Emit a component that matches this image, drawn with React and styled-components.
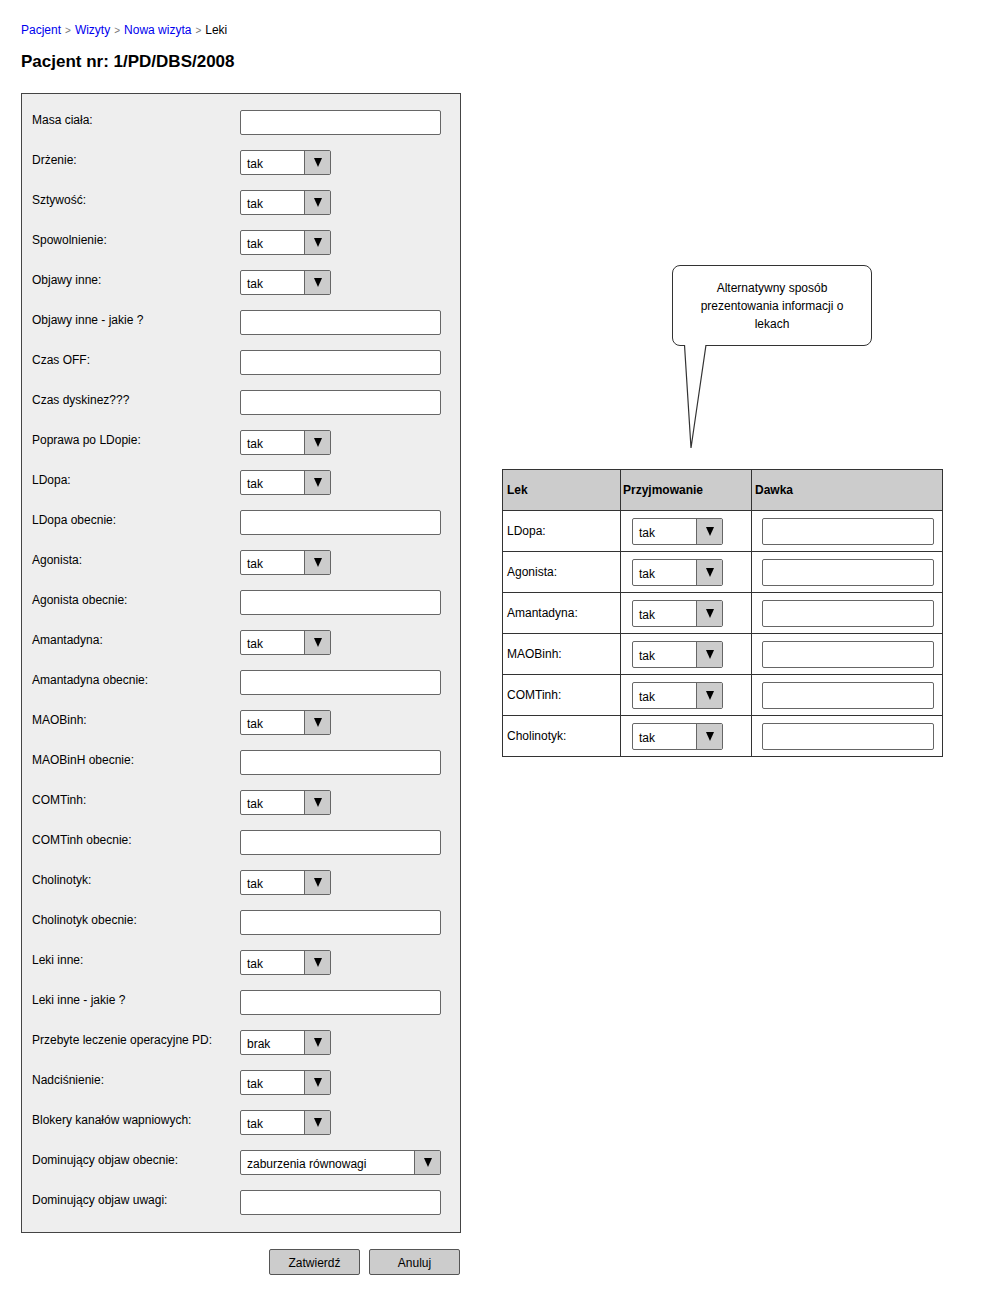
import React from 'react'
import styled, { createGlobalStyle } from 'styled-components'

const GlobalStyle = createGlobalStyle`
  body {
    margin: 0;
    background: #ffffff;
    font-family: 'Liberation Sans', Arial, sans-serif;
    font-size: 12px;
    color: #000;
  }
`

const Page = styled.div`
  display: flex;
  gap: 41px;
  padding: 20px 0 0 21px;
`

const LeftColumn = styled.div`
  width: 440px;
  display: flex;
  flex-direction: column;
`

const Breadcrumb = styled.div`
  line-height: 18px;
  font-size: 12px;
  padding-top: 1px;
  a {
    color: #0000ee;
    text-decoration: none;
  }
  span.sep {
    color: #777;
    font-size: 10px;
    margin: 0 4px;
  }
`

const Title = styled.h1`
  margin: 12px 0 0;
  font-size: 17px;
  line-height: 20px;
  font-weight: bold;
`

const Panel = styled.div`
  margin-top: 21px;
  background: #eeeeee;
  border: 1px solid #444;
  padding: 16px 19px 17px 10px;
  display: grid;
  grid-template-columns: 208px 201px;
  grid-auto-rows: 25px;
  row-gap: 15px;
  align-items: center;
`

const Label = styled.div`
  padding-bottom: 5px;
  white-space: nowrap;
`

const Field = styled.div`
  width: ${p => p.$width}px;
  height: ${p => p.$height || 25}px;
  box-sizing: border-box;
  background: #fff;
  border: 1px solid #666;
  border-radius: 2px;
`

const SelectBox = styled.div`
  width: ${p => p.$width}px;
  height: ${p => p.$height || 25}px;
  box-sizing: border-box;
  display: flex;
  background: #fff;
  border: 1px solid #666;
  border-radius: 2px;
  overflow: hidden;
`

const SelectValue = styled.div`
  flex: 1;
  padding: 3px 0 0 6px;
  display: flex;
  align-items: center;
`

const SelectButton = styled.div`
  width: 25px;
  background: #cccccc;
  border-left: 1px solid #666;
  display: flex;
  align-items: center;
  justify-content: center;
`

const Arrow = styled.span`
  width: 0;
  height: 0;
  border-left: 4.5px solid transparent;
  border-right: 4.5px solid transparent;
  border-top: 9px solid #000;
`

const Actions = styled.div`
  margin-top: 16px;
  display: flex;
  justify-content: flex-end;
  gap: 9px;
  padding-right: 1px;
`

const Button = styled.button`
  width: 91px;
  height: 26px;
  background: #cccccc;
  border: 1px solid #555;
  border-radius: 2px;
  font-family: 'Liberation Sans', Arial, sans-serif;
  font-size: 12px;
  color: #000;
  padding: 2px 0 0;
`

const RightColumn = styled.div`
  width: 441px;
  margin-top: 245px;
  display: flex;
  flex-direction: column;
`

const CalloutWrap = styled.div`
  position: relative;
  margin-left: 170px;
  width: 200px;
  height: 204px;
`

const Callout = styled.div`
  width: 200px;
  height: 81px;
  box-sizing: border-box;
  border: 1px solid #333;
  border-radius: 8px;
  background: #fff;
  text-align: center;
  line-height: 18px;
  padding-top: 13px;
`

const Tail = styled.svg`
  position: absolute;
  left: 12px;
  top: 80px;
`

const Table = styled.table`
  border-collapse: collapse;
  width: 441px;
  table-layout: fixed;
  border: 1px solid #333;
`

const Th = styled.th`
  width: ${p => p.$width}px;
  height: 40px;
  background: #cccccc;
  border: 1px solid #333;
  text-align: left;
  font-weight: bold;
  padding: 0 0 0 ${p => p.$pad || 4}px;
  font-size: 12px;
`

const Td = styled.td`
  height: 40px;
  border: 1px solid #333;
  padding: 0 0 0 ${p => p.$pad || 4}px;
  vertical-align: middle;
`

const Select = ({ value, width = 91, height }) => (
  <SelectBox $width={width} $height={height}>
    <SelectValue>{value}</SelectValue>
    <SelectButton>
      <Arrow />
    </SelectButton>
  </SelectBox>
)

const rows = [
  ['Masa ciała:', 'input'],
  ['Drżenie:', 'tak'],
  ['Sztywość:', 'tak'],
  ['Spowolnienie:', 'tak'],
  ['Objawy inne:', 'tak'],
  ['Objawy inne - jakie ?', 'input'],
  ['Czas OFF:', 'input'],
  ['Czas dyskinez???', 'input'],
  ['Poprawa po LDopie:', 'tak'],
  ['LDopa:', 'tak'],
  ['LDopa obecnie:', 'input'],
  ['Agonista:', 'tak'],
  ['Agonista obecnie:', 'input'],
  ['Amantadyna:', 'tak'],
  ['Amantadyna obecnie:', 'input'],
  ['MAOBinh:', 'tak'],
  ['MAOBinH obecnie:', 'input'],
  ['COMTinh:', 'tak'],
  ['COMTinh obecnie:', 'input'],
  ['Cholinotyk:', 'tak'],
  ['Cholinotyk obecnie:', 'input'],
  ['Leki inne:', 'tak'],
  ['Leki inne - jakie ?', 'input'],
  ['Przebyte leczenie operacyjne PD:', 'brak'],
  ['Nadciśnienie:', 'tak'],
  ['Blokery kanałów wapniowych:', 'tak'],
  ['Dominujący objaw obecnie:', 'wide'],
  ['Dominujący objaw uwagi:', 'input'],
]

const drugs = ['LDopa:', 'Agonista:', 'Amantadyna:', 'MAOBinh:', 'COMTinh:', 'Cholinotyk:']

export default function App() {
  return (
    <>
      <GlobalStyle />
      <Page>
        <LeftColumn>
          <Breadcrumb>
            <a href="#">Pacjent</a>
            <span className="sep">&gt;</span>
            <a href="#">Wizyty</a>
            <span className="sep">&gt;</span>
            <a href="#">Nowa wizyta</a>
            <span className="sep">&gt;</span>
            Leki
          </Breadcrumb>
          <Title>Pacjent nr: 1/PD/DBS/2008</Title>
          <Panel>
            {rows.map(([label, kind]) => (
              <React.Fragment key={label}>
                <Label>{label}</Label>
                {kind === 'input' && <Field $width={201} />}
                {kind === 'wide' && <Select value="zaburzenia równowagi" width={201} />}
                {kind !== 'input' && kind !== 'wide' && <Select value={kind} />}
              </React.Fragment>
            ))}
          </Panel>
          <Actions>
            <Button>Zatwierdź</Button>
            <Button>Anuluj</Button>
          </Actions>
        </LeftColumn>

        <RightColumn>
          <CalloutWrap>
            <Callout>
              Alternatywny sposób
              <br />
              prezentowania informacji o
              <br />
              lekach
            </Callout>
            <Tail width="24" height="104" viewBox="0 0 24 104">
              <polygon points="0.5,0 7,103 22,0" fill="#fff" />
              <polyline points="0.5,0 7,103 22,0" fill="none" stroke="#333" strokeWidth="1.2" />
            </Tail>
          </CalloutWrap>
          <Table>
            <thead>
              <tr>
                <Th $width={113}>Lek</Th>
                <Th $width={128} $pad={2}>Przyjmowanie</Th>
                <Th $width={187} $pad={3}>Dawka</Th>
              </tr>
            </thead>
            <tbody>
              {drugs.map(d => (
                <tr key={d}>
                  <Td>{d}</Td>
                  <Td $pad={11}>
                    <Select value="tak" width={91} height={27} />
                  </Td>
                  <Td $pad={10}>
                    <Field $width={172} $height={27} />
                  </Td>
                </tr>
              ))}
            </tbody>
          </Table>
        </RightColumn>
      </Page>
    </>
  )
}
